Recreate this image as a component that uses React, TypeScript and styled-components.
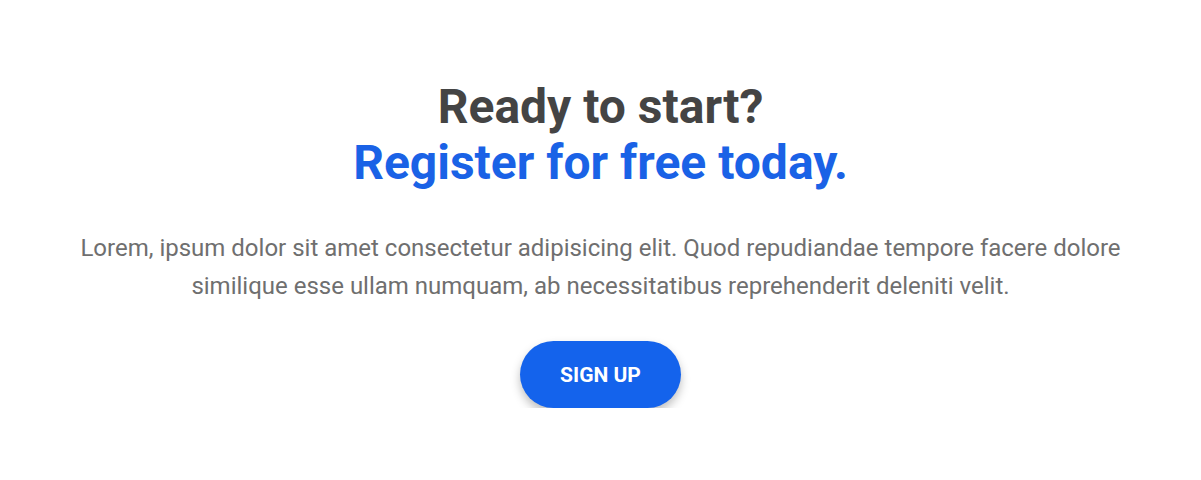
import React from "react";
import styled, { createGlobalStyle } from "styled-components";

const Global = createGlobalStyle`
  body { margin: 0; background: #fff; font-family: Roboto, "Noto Sans", sans-serif; }
`;

const Section = styled.section`
  display: flex;
  flex-direction: column;
  align-items: center;
  padding: 79px 40px 0;
  text-align: center;
`;

const Title = styled.h2`
  margin: 0;
  font-size: 48px;
  font-weight: 700;
  line-height: 56px;
  color: #444444;
`;

const Accent = styled.span`
  display: block;
  color: #1a62e6;
`;

const Text = styled.p`
  margin: 38px 0 0;
  max-width: 1080px;
  font-size: 24px;
  line-height: 38px;
  color: #6f6f6f;
`;

const Button = styled.button`
  margin-top: 36px;
  width: 161px;
  height: 67px;
  border: none;
  border-radius: 34px;
  background: #1463ec;
  color: #fff;
  font-family: Roboto, sans-serif;
  font-size: 21px;
  font-weight: 700;
  box-shadow: 0 5px 10px rgba(0, 0, 0, 0.25);
  cursor: pointer;
`;

export default function App() {
  return (
    <>
      <Global />
      <Section>
        <Title>
          Ready to start?
          <Accent>Register for free today.</Accent>
        </Title>
        <Text>
          Lorem, ipsum dolor sit amet consectetur adipisicing elit. Quod repudiandae tempore facere dolore similique esse ullam numquam, ab necessitatibus reprehenderit deleniti velit.
        </Text>
        <Button>SIGN UP</Button>
      </Section>
    </>
  );
}
